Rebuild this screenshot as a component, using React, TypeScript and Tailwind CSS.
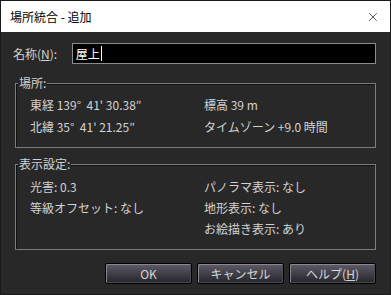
import { X } from "lucide-react";

const font = { fontFamily: '"Noto Sans CJK JP", "Noto Sans", sans-serif' };

function Btn({ children }: { children: React.ReactNode }) {
  return (
    <button className="w-[87px] h-[21px] rounded-[2px] border border-black bg-gradient-to-b from-[#5f5c68] to-[#26252b] shadow-[inset_1px_1px_0_#8a8794,inset_-1px_-1px_0_#4a4850] text-[12px] leading-none text-[#d6d6d6] flex items-center justify-center">
      {children}
    </button>
  );
}

export default function App() {
  return (
    <div
      className="w-[391px] h-[295px] flex flex-col border border-[#1a1a1a] bg-[#282828] text-[12px] text-[#d2d2d2]"
      style={font}
    >
      <div className="h-[31px] bg-white flex items-center justify-between pl-[9px] pr-[10px] text-black">
        <span className="text-[12px]">場所統合 - 追加</span>
        <X className="w-[14px] h-[14px] text-[#222]" strokeWidth={1.3} />
      </div>

      <div className="flex-1 flex flex-col px-[14px]">
        <div className="flex items-center mt-[11px] h-[21px]">
          <span className="-ml-[2px] w-[59px]">
            名称(<u>N</u>):
          </span>
          <div className="w-[305px] h-[21px] bg-black border border-[#8c8c8c] flex items-center pl-[3px] text-white text-[12px]">
            屋上
            <span className="ml-[1px] w-px h-[15px] bg-white" />
          </div>
        </div>

        <div className="relative mt-[19px] h-[65px] border border-[#7c7c7c] shadow-[inset_1px_1px_0_#111]">
          <span className="absolute -top-[9px] left-[2px] px-[1px] bg-[#282828] leading-[16px]">
            場所:
          </span>
          <div className="grid grid-cols-[174px_1fr] pt-[10px] pl-[14px] whitespace-pre">
            <div className="h-[22px] leading-[22px]">東経 139°  41' 30.38″</div>
            <div className="h-[22px] leading-[22px]">標高 39 m</div>
            <div className="h-[22px] leading-[22px]">北緯 35°  41' 21.25″</div>
            <div className="h-[22px] leading-[22px]">タイムゾーン +9.0 時間</div>
          </div>
        </div>

        <div className="relative mt-[16px] h-[86px] border border-[#7c7c7c] shadow-[inset_1px_1px_0_#111]">
          <span className="absolute -top-[9px] left-[2px] px-[1px] bg-[#282828] leading-[16px]">
            表示設定:
          </span>
          <div className="grid grid-cols-[174px_1fr] pt-[11px] pl-[14px]">
            <div className="h-[21px] leading-[21px]">光害: 0.3</div>
            <div className="h-[21px] leading-[21px]">パノラマ表示: なし</div>
            <div className="h-[21px] leading-[21px]">等級オフセット: なし</div>
            <div className="h-[21px] leading-[21px]">地形表示: なし</div>
            <div className="h-[21px]" />
            <div className="h-[21px] leading-[21px]">お絵描き表示: あり</div>
          </div>
        </div>

        <div className="flex justify-end gap-[5px] mt-[13px]">
          <Btn>OK</Btn>
          <Btn>キャンセル</Btn>
          <Btn>
            ヘルプ(<u>H</u>)
          </Btn>
        </div>
      </div>
    </div>
  );
}
